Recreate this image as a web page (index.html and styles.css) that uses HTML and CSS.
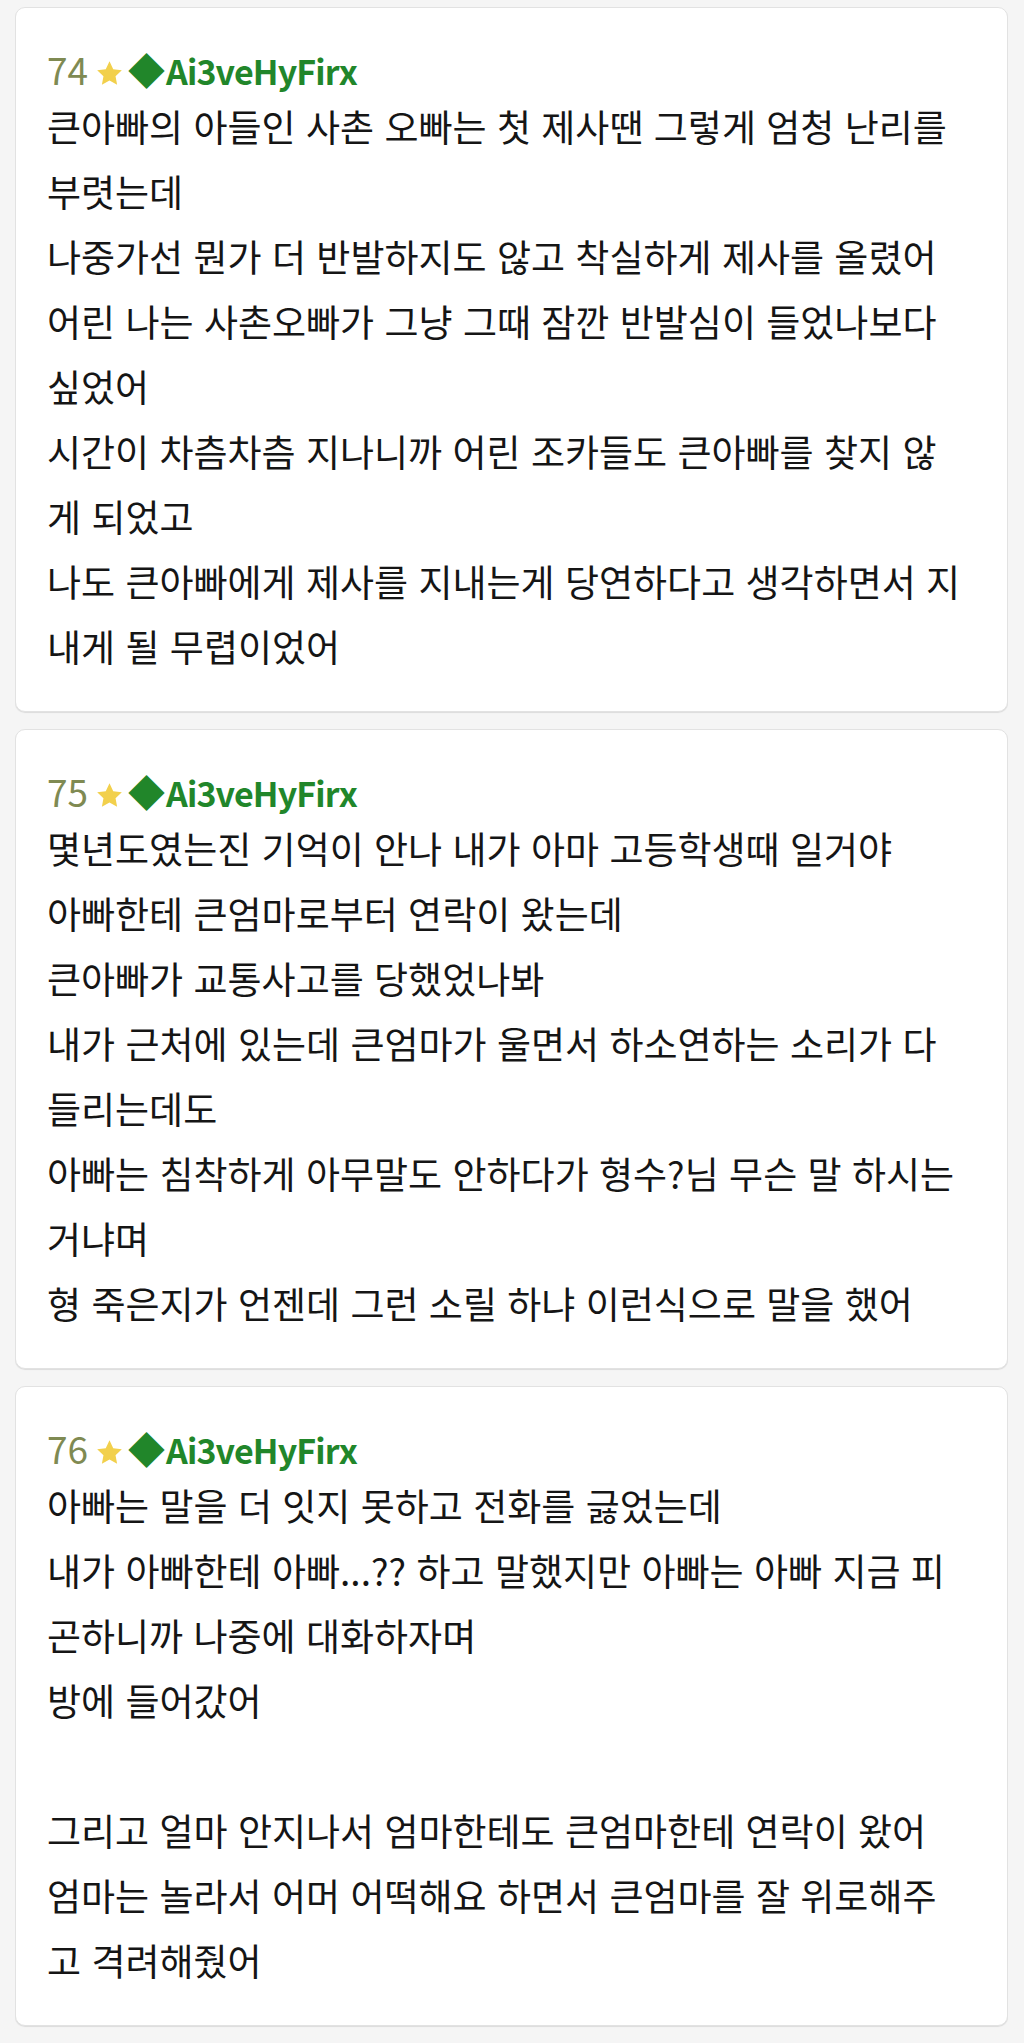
FILE: index.html
```html
<!DOCTYPE html>
<html lang="ko">
<head>
<meta charset="utf-8">
<title>Thread</title>
<link rel="stylesheet" href="styles.css">
</head>
<body>
<div class="thread">
  <article class="post">
    <header class="post-head">
      <span class="post-no">74</span>
      <svg class="star" viewBox="0 0 24 24" aria-hidden="true"><path d="M12 1.8l3.1 6.6 7.1.9-5.2 4.9 1.3 7.1L12 17.8l-6.3 3.5 1.3-7.1L1.8 9.3l7.1-.9z"/></svg>
      <span class="post-name"><span class="diamond">◆</span>Ai3veHyFirx</span>
    </header>
    <div class="post-body">큰아빠의 아들인 사촌 오빠는 첫 제사땐 그렇게 엄청 난리를 부렷는데<br>나중가선 뭔가 더 반발하지도 않고 착실하게 제사를 올렸어<br>어린 나는 사촌오빠가 그냥 그때 잠깐 반발심이 들었나보다 싶었어<br>시간이 차츰차츰 지나니까 어린 조카들도 큰아빠를 찾지 않게 되었고<br>나도 큰아빠에게 제사를 지내는게 당연하다고 생각하면서 지내게 될 무렵이었어</div>
  </article>
  <article class="post">
    <header class="post-head">
      <span class="post-no">75</span>
      <svg class="star" viewBox="0 0 24 24" aria-hidden="true"><path d="M12 1.8l3.1 6.6 7.1.9-5.2 4.9 1.3 7.1L12 17.8l-6.3 3.5 1.3-7.1L1.8 9.3l7.1-.9z"/></svg>
      <span class="post-name"><span class="diamond">◆</span>Ai3veHyFirx</span>
    </header>
    <div class="post-body">몇년도였는진 기억이 안나 내가 아마 고등학생때 일거야<br>아빠한테 큰엄마로부터 연락이 왔는데<br>큰아빠가 교통사고를 당했었나봐<br>내가 근처에 있는데 큰엄마가 울면서 하소연하는 소리가 다 들리는데도<br>아빠는 침착하게 아무말도 안하다가 형수?님 무슨 말 하시는 거냐며<br>형 죽은지가 언젠데 그런 소릴 하냐 이런식으로 말을 했어</div>
  </article>
  <article class="post">
    <header class="post-head">
      <span class="post-no">76</span>
      <svg class="star" viewBox="0 0 24 24" aria-hidden="true"><path d="M12 1.8l3.1 6.6 7.1.9-5.2 4.9 1.3 7.1L12 17.8l-6.3 3.5 1.3-7.1L1.8 9.3l7.1-.9z"/></svg>
      <span class="post-name"><span class="diamond">◆</span>Ai3veHyFirx</span>
    </header>
    <div class="post-body">아빠는 말을 더 잇지 못하고 전화를 긇었는데<br>내가 아빠한테 아빠...?? 하고 말했지만 아빠는 아빠 지금 피곤하니까 나중에 대화하자며<br>방에 들어갔어<br><br>그리고 얼마 안지나서 엄마한테도 큰엄마한테 연락이 왔어<br>엄마는 놀라서 어머 어떡해요 하면서 큰엄마를 잘 위로해주고 격려해줬어</div>
  </article>
  <article class="post post-next" aria-hidden="true"></article>
</div>
</body>
</html>
```
FILE: styles.css
```css
html, body {
  background: #f5f5f5;
}
body {
  margin: 7px 16px 0 15px;
  font-family: "Noto Sans CJK KR", "Noto Sans", sans-serif;
  color: #151515;
}
.thread {
  display: flex;
  flex-direction: column;
  gap: 17px;
}
.post {
  background: #fff;
  border: 1px solid #e2e2e2;
  border-radius: 10px;
  box-shadow: 0 1px 1px rgba(0, 0, 0, 0.10);
  padding: 37px 40px 32px 31px;
}
.post-next {
  height: 300px;
}
.post-head {
  display: flex;
  align-items: center;
  height: 49px;
  font-size: 37px;
  line-height: 49px;
}
.post-no {
  color: #7f8a52;
  font-weight: 400;
}
.star {
  width: 29px;
  height: 29px;
  margin: 8px 4px 0 7px;
  fill: #f2d04c;
}
.post-name {
  color: #21862a;
  font-weight: 700;
  font-size: 34px;
  letter-spacing: -0.9px;
}
.diamond {
  font-size: 37px;
  letter-spacing: 0;
  margin-right: 1px;
}
.post-body {
  font-size: 37px;
  line-height: 65px;
}
```
